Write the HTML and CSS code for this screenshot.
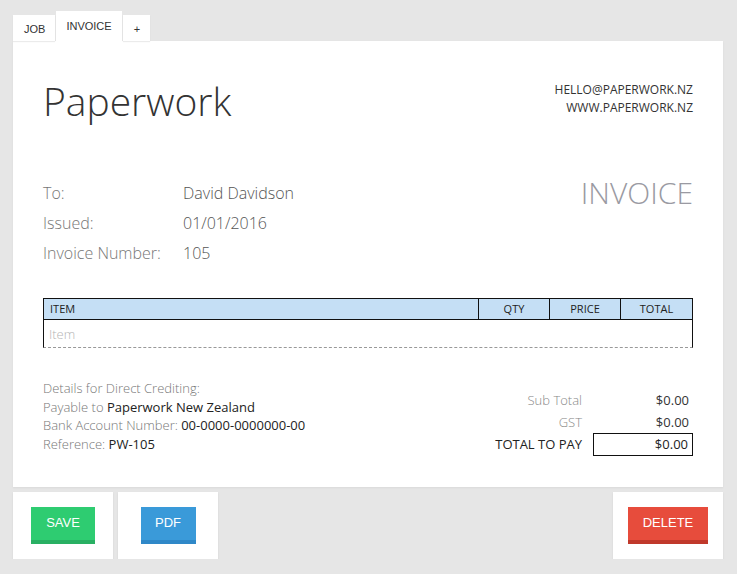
FILE: index.html
```html
<!DOCTYPE html>
<html>
<head>
<meta charset="utf-8">
<link rel="stylesheet" href="styles.css">
</head>
<body>
<div class="app">
  <div class="tabs">
    <div class="tab">JOB</div>
    <div class="tab active">INVOICE</div>
    <div class="tab">+</div>
  </div>
  <div class="sheet">
    <div class="head">
      <div class="brand">Paperwork</div>
      <div class="contact">
        <div>HELLO@PAPERWORK.NZ</div>
        <div>WWW.PAPERWORK.NZ</div>
      </div>
    </div>
    <div class="meta">
      <div class="fields">
        <div class="field"><span class="lbl">To:</span><span class="val">David Davidson</span></div>
        <div class="field"><span class="lbl">Issued:</span><span class="val">01/01/2016</span></div>
        <div class="field"><span class="lbl">Invoice Number:</span><span class="val">105</span></div>
      </div>
      <div class="doctitle">INVOICE</div>
    </div>
    <div class="items">
      <div class="row hdr">
        <div class="c-item">ITEM</div>
        <div class="c-qty">QTY</div>
        <div class="c-price">PRICE</div>
        <div class="c-total">TOTAL</div>
      </div>
      <div class="row body">
        <div class="c-item placeholder">Item</div>
      </div>
    </div>
    <div class="foot">
      <div class="bank">
        <div>Details for Direct Crediting:</div>
        <div>Payable to <span class="dark">Paperwork New Zealand</span></div>
        <div>Bank Account Number: <span class="dark">00-0000-0000000-00</span></div>
        <div>Reference: <span class="dark">PW-105</span></div>
      </div>
      <div class="totals">
        <div class="trow"><span class="tl">Sub Total</span><span class="tv">$0.00</span></div>
        <div class="trow"><span class="tl">GST</span><span class="tv">$0.00</span></div>
        <div class="trow grand"><span class="tl">TOTAL TO PAY</span><span class="tv">$0.00</span></div>
      </div>
    </div>
  </div>
  <div class="actions">
    <div class="card"><div class="btn save">SAVE</div></div>
    <div class="card"><div class="btn pdf">PDF</div></div>
    <div class="spacer"></div>
    <div class="card wide"><div class="btn del">DELETE</div></div>
  </div>
</div>
</body>
</html>
```
FILE: styles.css
```css
html, body {
  margin: 0;
  padding: 0;
  background: #e6e6e6;
}
body {
  font-family: "Open Sans", sans-serif;
  color: #333;
}
.app {
  width: 710px;
  padding: 11px 0 0 13px;
}
.tabs {
  display: flex;
  align-items: flex-end;
  gap: 1px;
  height: 30px;
}
.tab {
  background: #fff;
  font-family: "Liberation Sans", Arial, sans-serif;
  font-size: 11px;
  color: #333;
  height: 26px;
  line-height: 28px;
  padding: 0 10px 0 11px;
  box-shadow: 0 1px 1px rgba(0,0,0,0.08);
}
.tab.active {
  height: 30px;
  line-height: 30px;
  padding: 0 10px;
  box-shadow: none;
}
.sheet {
  background: #fff;
  padding: 30px 30px 0 30px;
  height: 416px;
  box-shadow: 0 1px 2px rgba(0,0,0,0.06);
}
.head {
  display: flex;
  justify-content: space-between;
  align-items: flex-start;
}
.brand {
  font-weight: 300;
  font-size: 39px;
  line-height: 60px;
  color: #333;
}
.contact {
  text-align: right;
  font-size: 12px;
  line-height: 18px;
  margin-top: 10px;
  color: #333;
}
.meta {
  display: flex;
  justify-content: space-between;
  margin-top: 47px;
}
.field {
  display: flex;
  font-size: 16px;
  font-weight: 300;
  line-height: 30px;
}
.lbl {
  width: 140px;
  color: #777;
}
.val {
  color: #555;
}
.doctitle {
  font-weight: 300;
  font-size: 30px;
  line-height: 30px;
  color: #9a9aa2;
}
.items {
  margin-top: 30px;
}
.row {
  display: flex;
}
.row.hdr {
  background: #c5dff5;
  border: 1px solid #111;
  height: 20px;
  font-size: 11px;
  line-height: 20px;
  color: #222;
}
.row.hdr > div {
  text-align: center;
}
.row.hdr .c-item {
  text-align: left;
  padding-left: 6px;
}
.c-item { flex: 1; }
.c-qty, .c-price { width: 70px; border-left: 1px solid #111; }
.c-total { width: 71px; border-left: 1px solid #111; }
.row.body {
  border-left: 1px solid #111;
  border-right: 1px solid #111;
  border-bottom: 1px dashed #999;
  height: 27px;
}
.placeholder {
  color: #b5b5b5;
  font-size: 13px;
  font-weight: 300;
  line-height: 28px;
  padding-left: 5px;
}
.foot {
  display: flex;
  justify-content: space-between;
  margin-top: 31px;
}
.bank {
  font-size: 13px;
  font-weight: 300;
  line-height: 18.5px;
  color: #777;
}
.bank .dark { color: #222; font-weight: 400; }
.totals {
  margin-top: 10px;
  width: 240px;
}
.trow {
  display: flex;
  justify-content: flex-end;
  font-size: 13px;
  line-height: 22px;
}
.tl {
  color: #888;
  font-weight: 300;
  text-align: right;
  flex: 1;
  padding-right: 11px;
}
.tv {
  width: 100px;
  text-align: right;
  padding-right: 4px;
  box-sizing: border-box;
  color: #333;
}
.trow.grand .tl { color: #222; font-weight: 400; }
.trow.grand .tv {
  border: 1px solid #111;
  line-height: 21px;
  color: #222;
}
.actions {
  display: flex;
  gap: 5px;
  margin-top: 5px;
}
.spacer { flex: 1; }
.card {
  background: #fff;
  width: 100px;
  height: 67px;
  display: flex;
  justify-content: center;
  align-items: center;
  box-shadow: 0 1px 2px rgba(0,0,0,0.08);
}
.card.wide { width: 110px; }
.btn {
  font-family: "Liberation Sans", Arial, sans-serif;
  color: #fff;
  font-size: 13px;
  height: 33px;
  line-height: 32px;
  text-align: center;
  margin-top: -1px;
}
.btn.save { background: #2ecc71; border-bottom: 4px solid #29b063; width: 64px; }
.btn.pdf { background: #3a9ad9; border-bottom: 4px solid #2f88c8; width: 55px; }
.btn.del { background: #e74c3c; border-bottom: 4px solid #c0392b; width: 80px; }
```
